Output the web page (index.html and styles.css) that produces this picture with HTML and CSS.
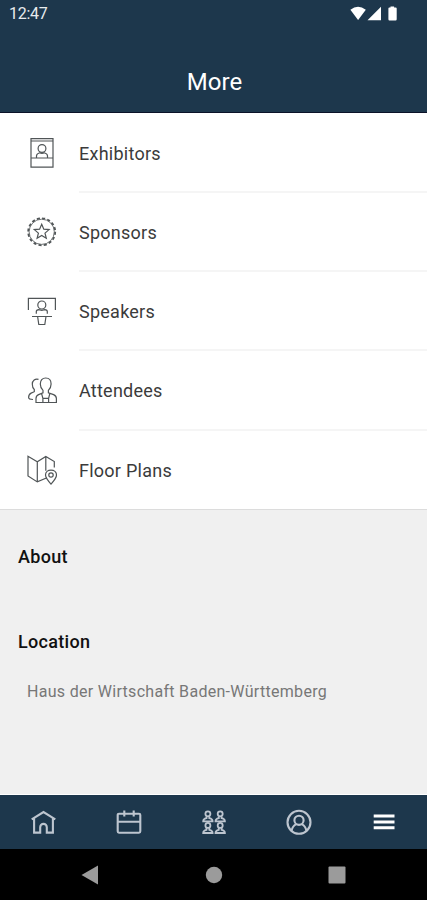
FILE: index.html
```html
<!DOCTYPE html>
<html lang="en">
<head>
<meta charset="utf-8">
<meta name="viewport" content="width=device-width, initial-scale=1">
<title>More</title>
<link rel="stylesheet" href="styles.css">
</head>
<body>
<div class="screen">
  <header class="header">
    <div class="status">
      <span class="time">12:47</span>
      <svg class="status-icons" width="50" height="16" viewBox="0 0 50 16" fill="#fff">
        <path d="M0.4 3.8Q8 -2.2 15.8 3.8L8.1 14z"/>
        <path d="M31 0.8V14.2H17.5z"/>
        <path d="M40.5 .6h3.6v1h1.6q1 0 1 1v10.6q0 1.2-1.1 1.2h-6.1q-1.1 0-1.1-1.2V2.6q0-1 1-1h1.1z"/>
      </svg>
    </div>
    <h1 class="title">More</h1>
  </header>

  <ul class="menu">
    <li class="item">
      <svg class="icon" viewBox="0 0 30 30">
        <path d="M4 .7h22v28.4H4zM4 3h22M4 20h22"/>
        <circle cx="15" cy="10.5" r="3.9"/>
        <path d="M9.5 20v-2.2q0-2 3.3-3l2.2.6 2.2-.6q3.3 1 3.3 3V20"/>
      </svg>
      <span class="label">Exhibitors</span>
    </li>
    <li class="item">
      <svg class="icon" viewBox="0 0 30 30">
        <circle class="scallop" cx="14.7" cy="14.8" r="13.5"/>
        <circle class="thin" cx="14.7" cy="14.8" r="12.6"/>
        <path d="M14.7 7.2l2.1 5 5.3.4-4.1 3.5 1.3 5.2-4.6-2.8-4.6 2.8 1.3-5.2-4.1-3.5 5.3-.4z"/>
      </svg>
      <span class="label">Sponsors</span>
    </li>
    <li class="item">
      <svg class="icon" viewBox="0 0 30 30">
        <path d="M1.4 13V1.3h27V13M1 1.3h28"/>
        <circle cx="14.8" cy="8" r="4"/>
        <path d="M9.3 16.8v-2.2q0-1.5 2.6-1.9l2.9.6 2.9-.6q2.6.4 2.6 1.9v2.2M5 19.5h20M10.6 19.5l1.2 8h6l1.2-8"/>
      </svg>
      <span class="label">Speakers</span>
    </li>
    <li class="item">
      <svg class="icon" viewBox="0 0 30 30">
        <path d="M16 14.4q-2.7-2.6-2.7-6.4c0-3.7 2-6 5.4-6s5.4 2.3 5.4 6q0 3.8-2.7 6.4v2.4l5.2 1.8q2.8 1.2 2.8 4v3.9H9v-3.9q0-2.9 2.6-4l4.4-1.8zM14.6 17.6l1.3 4.8h5.7l1.2-4.8M15.9 22.4v4M21.6 22.4v4"/>
        <path d="M11.5 3.4C8.2 2.3 5.3 4.7 5.3 8.3c0 2.4.6 4 2 5.2v2.2l-3.2 1.4q-2.5 1.1-2.5 4.5 0 1.9 4.4 1.9"/>
      </svg>
      <span class="label">Attendees</span>
    </li>
    <li class="item last">
      <svg class="icon" viewBox="0 0 30 30">
        <path d="M20 22.8l-9.7 4.1-9.3-6V1.3l9.3 5.4 8.5-5.3 8.5 5.1v6M10.3 6.7v20.2M18.8 1.4v14.4"/>
        <path d="M24 29.1q-5.5-5.9-5.5-9c0-3.1 2.4-5 5.5-5s5.5 1.9 5.5 5q0 3.1-5.5 9z"/>
        <circle cx="24" cy="20" r="2.2"/>
      </svg>
      <span class="label">Floor Plans</span>
    </li>
  </ul>

  <main class="info">
    <h2 class="heading about">About</h2>
    <h2 class="heading location">Location</h2>
    <p class="place">Haus der Wirtschaft Baden-Württemberg</p>
  </main>

  <nav class="tabs">
    <svg class="tab" viewBox="0 0 28 28">
      <path d="M1.7 10.3L13.5 3l11.8 7.3M4.1 9.6v14h6.1v-5.4a3.3 3.3 0 0 1 6.6 0v5.4h6.1v-14"/>
    </svg>
    <svg class="tab" viewBox="0 0 28 28">
      <path d="M4 4.7h20q1.3 0 1.3 1.4v16.2q0 1.4-1.3 1.4H4q-1.3 0-1.3-1.4V6.1Q2.7 4.7 4 4.7zM2.7 12.8h22.6M9.3 1.6v6M18.7 1.6v6"/>
    </svg>
    <svg class="tab people" viewBox="0 0 28 28">
      <g id="person">
        <circle cx="7.9" cy="4.8" r="2.5"/>
        <path d="M6.5 7.4v1.8q-3.3.6-3.3 3.2h9.4q0-2.6-3.3-3.2V7.4"/>
      </g>
      <use href="#person" x="12.3"/>
      <use href="#person" y="11.6"/>
      <use href="#person" x="12.3" y="11.6"/>
    </svg>
    <svg class="tab" viewBox="0 0 28 28">
      <circle cx="14" cy="13.3" r="11.5"/>
      <circle cx="14" cy="11.3" r="4.6"/>
      <path d="M6.5 21.9q1-5 4.7-6.8M21.5 21.9q-1-5-4.7-6.8"/>
    </svg>
    <svg class="tab active" viewBox="0 0 28 28">
      <path d="M3.7 7.1h20.8M3.7 12.9h20.8M3.7 18.7h20.8"/>
    </svg>
  </nav>

  <div class="system">
    <svg width="18" height="20" viewBox="0 0 18 20"><path d="M.5 10L17 .5v19z"/></svg>
    <svg width="18" height="18" viewBox="0 0 18 18"><circle cx="9" cy="9" r="8.2"/></svg>
    <svg width="18" height="18" viewBox="0 0 18 18"><rect x=".5" y=".5" width="17" height="17" rx="1"/></svg>
  </div>
</div>
</body>
</html>
```
FILE: styles.css
```css
* {
  box-sizing: border-box;
}

body {
  margin: 0;
  font-family: Roboto, "Liberation Sans", sans-serif;
}

h1,
h2,
p,
ul {
  margin: 0;
  padding: 0;
}

.screen {
  display: flex;
  flex-direction: column;
  width: 427px;
  height: 900px;
  background: #f0f0f0;
}

.header {
  height: 113px;
  background: #1d374c;
  border-bottom: 1px solid #0b1228;
  color: #fff;
}

.status {
  display: flex;
  align-items: center;
  justify-content: space-between;
  height: 28px;
  padding: 0 27px 0 9px;
}

.time {
  font-size: 16px;
  line-height: 28px;
  letter-spacing: -0.3px;
  color: #e8ebed;
}

.status-icons {
  margin-top: -1px;
}

.title {
  margin-top: 38px;
  padding-left: 2px;
  font-size: 24px;
  font-weight: 400;
  line-height: 33px;
  text-align: center;
}

.menu {
  height: 397px;
  background: #fff;
  border-bottom: 1px solid #dcdcdc;
  list-style: none;
}

.item {
  display: flex;
  align-items: center;
  height: 79.25px;
  padding-left: 27px;
}

.icon {
  width: 30px;
  height: 30px;
  margin: 1px 22px 0 0;
  fill: none;
  stroke: #505557;
  stroke-width: 1.2;
}

.scallop {
  stroke-width: 1.8;
  stroke-dasharray: 3.1 2.2;
}

.thin {
  stroke-width: 0.8;
}

.label {
  flex: 1;
  height: 100%;
  margin-top: 1px;
  border-bottom: 2px solid #f5f5f5;
  color: #3b3b3b;
  font-size: 18px;
  line-height: 80px;
  letter-spacing: 0.25px;
}

.last .label {
  border-bottom: 0;
}

.info {
  flex: 1;
  padding: 35px 18px 0;
  border-bottom: 1px solid #fff;
}

.heading {
  color: #111;
  font-size: 18px;
  font-weight: 500;
  line-height: 24px;
  letter-spacing: 0.3px;
}

.location {
  margin-top: 61px;
}

.place {
  margin: 25px 0 0 9px;
  color: #777;
  font-size: 16px;
  line-height: 25px;
  letter-spacing: 0.3px;
  white-space: nowrap;
}

.tabs {
  display: grid;
  grid-template-columns: repeat(5, 1fr);
  place-items: center;
  height: 54px;
  padding: 1px 0 0 1px;
  background: #1d374c;
}

.tab {
  width: 28px;
  height: 28px;
  fill: none;
  stroke: #bdc5cf;
  stroke-width: 2.1;
}

.people {
  stroke-width: 1.8;
}

.active {
  stroke: #fff;
  stroke-width: 3;
}

.system {
  display: flex;
  align-items: center;
  justify-content: space-between;
  height: 51px;
  padding: 0 81px;
  background: #000;
  fill: #9b9b9b;
}
```
